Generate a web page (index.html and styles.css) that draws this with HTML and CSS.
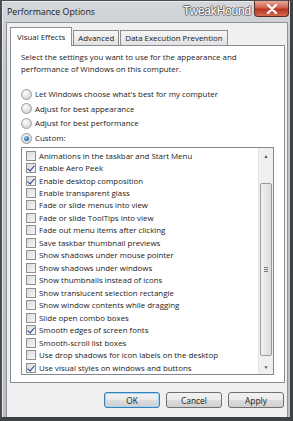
FILE: index.html
```html
<!DOCTYPE html>
<html lang="en">
<head>
  <meta charset="UTF-8">
  <title>Performance Options</title>
  <link rel="stylesheet" href="styles.css">
</head>
<body>
  <div class="window">
    <div class="titlebar">
      <span class="title">Performance Options</span>
      <span class="watermark">TweakHound</span>
      <button class="close-btn">
        <svg width="12" height="10" viewBox="0 0 12 10"><path d="M2 1 L10 9 M10 1 L2 9" stroke="#fff" stroke-width="2.4" stroke-linecap="round"/></svg>
      </button>
    </div>
    <div class="client">
      <div class="tabs">
        <div class="tab active">Visual Effects</div>
        <div class="tab">Advanced</div>
        <div class="tab">Data Execution Prevention</div>
      </div>
      <div class="panel">
        <p class="intro">Select the settings you want to use for the appearance and performance of Windows on this computer.</p>
        <div class="radios">
          <label class="radio"><span class="dot"></span>Let Windows choose what's best for my computer</label>
          <label class="radio"><span class="dot"></span>Adjust for best appearance</label>
          <label class="radio"><span class="dot"></span>Adjust for best performance</label>
          <label class="radio selected"><span class="dot"></span>Custom:</label>
        </div>
        <div class="listbox">
          <ul class="items">
            <li><span class="box"></span>Animations in the taskbar and Start Menu</li>
            <li class="checked"><span class="box"></span>Enable Aero Peek</li>
            <li class="checked"><span class="box"></span>Enable desktop composition</li>
            <li><span class="box"></span>Enable transparent glass</li>
            <li><span class="box"></span>Fade or slide menus into view</li>
            <li><span class="box"></span>Fade or slide ToolTips into view</li>
            <li><span class="box"></span>Fade out menu items after clicking</li>
            <li><span class="box"></span>Save taskbar thumbnail previews</li>
            <li><span class="box"></span>Show shadows under mouse pointer</li>
            <li><span class="box"></span>Show shadows under windows</li>
            <li><span class="box"></span>Show thumbnails instead of icons</li>
            <li><span class="box"></span>Show translucent selection rectangle</li>
            <li><span class="box"></span>Show window contents while dragging</li>
            <li><span class="box"></span>Slide open combo boxes</li>
            <li class="checked"><span class="box"></span>Smooth edges of screen fonts</li>
            <li><span class="box"></span>Smooth-scroll list boxes</li>
            <li><span class="box"></span>Use drop shadows for icon labels on the desktop</li>
            <li class="checked"><span class="box"></span>Use visual styles on windows and buttons</li>
          </ul>
          <div class="scrollbar">
            <div class="arrow">&#9650;</div>
            <div class="track">
              <div class="thumb"><span class="grip"></span></div>
            </div>
            <div class="arrow">&#9660;</div>
          </div>
        </div>
      </div>
      <div class="buttons">
        <button class="btn default">OK</button>
        <button class="btn">Cancel</button>
        <button class="btn">Apply</button>
      </div>
    </div>
  </div>
</body>
</html>
```
FILE: styles.css
```css
/* Win7 style dialog */
body {
  margin: 0;
  background: #ffffff;
  font-family: 'Open Sans', 'Noto Sans', sans-serif;
  font-size: 7.9px;
  color: #222222;
}
.window {
  width: 293px;
  height: 421px;
  box-sizing: border-box;
  display: flex;
  flex-direction: column;
  background: linear-gradient(#d4d8dc, #c3c7cb 60px, #b9bcc0);
  border: 1px solid #4a4d52;
  border-left-width: 2px;
  border-right: 3px solid #3e4146;
  border-bottom: 4px solid #3e4146;
  box-shadow: inset 1px 1px 0 #e8eaec;
}
.titlebar {
  height: 21px;
  display: flex;
  align-items: flex-start;
}
.title {
  margin: 5px 0 0 5px;
  font-size: 8.8px;
  color: #1a1a1a;
}
.watermark {
  margin: 3px 0 0 auto;
  font-family: 'Liberation Sans', sans-serif;
  font-size: 12px;
  letter-spacing: -0.2px;
  color: #ffffff;
  text-shadow: 1px 0 0 #6c6f73, -1px 0 0 #6c6f73, 0 1px 0 #6c6f73, 0 -1px 0 #6c6f73;
}
.close-btn {
  margin: 0 1px 0 3px;
  width: 35px;
  height: 16px;
  padding: 0;
  border: 1px solid #5a2a24;
  border-top: none;
  border-radius: 0 0 4px 4px;
  background: linear-gradient(#e9a99b, #d0604b 45%, #b8331f 55%, #d66a4f);
  display: flex;
  align-items: center;
  justify-content: center;
}
.client {
  flex: 1;
  margin: 0 2px 0 4px;
  background: #f0f0f0;
  border: 1px solid #8e9296;
  border-bottom: none;
  display: flex;
  flex-direction: column;
  padding: 4px 2px 0 3px;
}
.tabs {
  display: flex;
  align-items: flex-end;
  height: 18px;
}
.tab {
  height: 14px;
  line-height: 14px;
  padding: 0 4px;
  margin-right: 1px;
  border: 1px solid #8c8e94;
  border-bottom: none;
  background: linear-gradient(#f6f6f6, #e2e2e2);
}
.tab.active {
  height: 18px;
  line-height: 19px;
  padding: 0 6px;
  background: #ffffff;
  margin-bottom: -1px;
  position: relative;
  z-index: 1;
}
.panel {
  height: 338px;
  box-sizing: border-box;
  background: #ffffff;
  border: 1px solid #898c95;
  padding: 5px 10px 0 10px;
}
.intro {
  margin: 0;
  line-height: 12px;
  width: 245px;
}
.radios {
  margin-top: 12px;
  display: flex;
  flex-direction: column;
}
.radio {
  display: flex;
  align-items: center;
  height: 14.6px;
}
.dot {
  width: 9px;
  height: 9px;
  border-radius: 50%;
  border: 1px solid #9a9a9a;
  background: radial-gradient(circle at 40% 35%, #ffffff, #d8d8d8 70%);
  margin-right: 3px;
  display: flex;
  align-items: center;
  justify-content: center;
}
.radio.selected .dot::after {
  content: '';
  width: 5px;
  height: 5px;
  border-radius: 50%;
  background: radial-gradient(circle at 40% 35%, #8ad0f5, #1b5fa8 75%);
}
.listbox {
  margin-top: 2px;
  height: 228px;
  box-sizing: border-box;
  border: 1px solid #828790;
  display: flex;
}
.items {
  flex: 1;
  list-style: none;
  margin: 0;
  padding: 1px 0 0 4px;
}
.items li {
  height: 12.47px;
  display: flex;
  align-items: center;
  white-space: nowrap;
}
.box {
  width: 8px;
  height: 8px;
  border: 1px solid #8f8f8f;
  background: linear-gradient(135deg, #dcdcdc, #f6f6f6);
  margin-right: 3px;
  position: relative;
}
.checked .box::after {
  content: '';
  position: absolute;
  left: 2px;
  top: 0;
  width: 3px;
  height: 6px;
  border: solid #1c3a8a;
  border-width: 0 1.5px 1.5px 0;
  transform: rotate(40deg);
}
.scrollbar {
  width: 14px;
  display: flex;
  flex-direction: column;
  background: #f0f0f0;
  border-left: 1px solid #e4e4e4;
}
.arrow {
  height: 15px;
  font-size: 5px;
  color: #505050;
  display: flex;
  align-items: center;
  justify-content: center;
}
.track {
  flex: 1;
  padding-top: 20px;
  padding-bottom: 3px;
  display: flex;
}
.thumb {
  flex: 1;
  margin: 0 1px;
  border: 1px solid #9a9a9a;
  border-radius: 2px;
  background: linear-gradient(90deg, #f2f2f2, #dcdcdc);
  display: flex;
  align-items: center;
  justify-content: center;
}
.grip {
  width: 4px;
  height: 5px;
  background: repeating-linear-gradient(#7a7a7a 0 1px, transparent 1px 2px);
}
.buttons {
  display: flex;
  justify-content: flex-end;
  gap: 6px;
  padding: 9px 1px 0 0;
}
.btn {
  width: 56px;
  height: 16px;
  padding: 0;
  font-family: inherit;
  font-size: 8.4px;
  color: #1a1a1a;
  border: 1px solid #707070;
  border-radius: 3px;
  background: linear-gradient(#f2f2f2, #ebebeb 50%, #dddddd 50%, #cfcfcf);
}
.btn.default {
  border-color: #3c7fb1;
  box-shadow: inset 0 0 0 1px #9fd5f5;
}
```
